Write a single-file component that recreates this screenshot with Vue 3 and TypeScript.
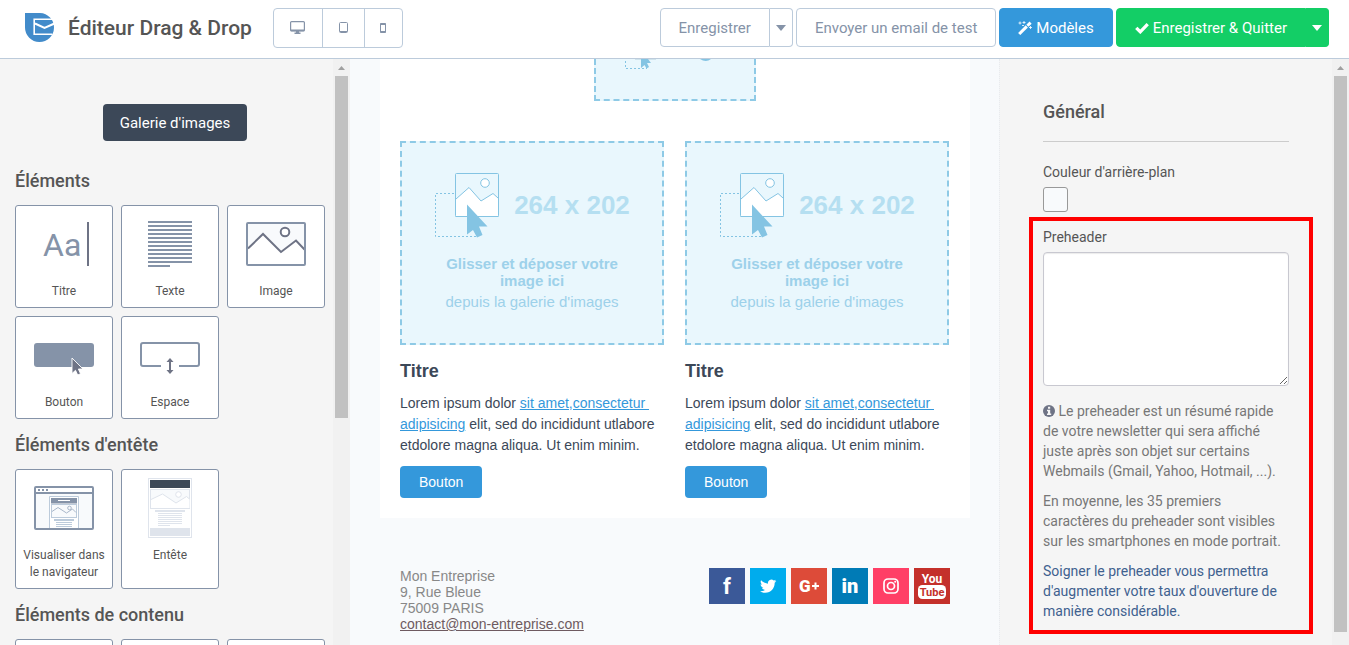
<script setup lang="ts">
import { ref } from 'vue'

interface Tile {
  id: string
  label: string
}

interface Group {
  title: string
  tiles: Tile[]
}

const groups: Group[] = [
  {
    title: 'Éléments',
    tiles: [
      { id: 'title', label: 'Titre' },
      { id: 'text', label: 'Texte' },
      { id: 'image', label: 'Image' },
      { id: 'button', label: 'Bouton' },
      { id: 'space', label: 'Espace' },
    ],
  },
  {
    title: "Éléments d'entête",
    tiles: [
      { id: 'browser', label: 'Visualiser dans le navigateur' },
      { id: 'header', label: 'Entête' },
    ],
  },
  {
    title: 'Éléments de contenu',
    tiles: [
      { id: 'content-a', label: '' },
      { id: 'content-b', label: '' },
      { id: 'content-c', label: '' },
    ],
  },
]

const columns = [1, 2]
const textLines = Array.from({ length: 11 }, (_, i) => 7 + i * 4)
const preheader = ref('')
</script>

<template>
  <div class="app">
    <header class="topbar">
      <svg class="logo" width="30" height="30" viewBox="0 0 30 30" aria-hidden="true">
        <path d="M0 0h15a14.500 14.500 0 1 1-15 14.500z" fill="#428bca" />
        <path d="M28 6.200H9.200V21.200H27" fill="none" stroke="#fff" stroke-width="1.600" />
        <path d="M10 10.500 19.500 15 29.500 10.500" fill="none" stroke="#fff" stroke-width="2" />
      </svg>
      <h1>Éditeur Drag &amp; Drop</h1>
      <div class="devices">
        <button type="button" aria-label="Ordinateur">
          <svg width="15" height="13" viewBox="0 0 15 13">
            <rect x="0.600" y="0.600" width="13.800" height="9.200" rx="1" fill="none" stroke="#8593a8" stroke-width="1.200" />
            <path d="M0.500 8.500h14v1.800h-14zM6 10h3v1.500h1.500V13h-6v-1.500H6z" fill="#8593a8" />
          </svg>
        </button>
        <button type="button" aria-label="Tablette">
          <svg width="9" height="11" viewBox="0 0 9 11">
            <rect x="0.500" y="0.500" width="8" height="10" rx="1" fill="none" stroke="#8593a8" />
            <path d="M1 9h7v1H1z" fill="#8593a8" />
          </svg>
        </button>
        <button type="button" aria-label="Mobile">
          <svg width="6" height="10" viewBox="0 0 6 10">
            <path d="M0.500 0.500h5v9h-5z" fill="none" stroke="#8593a8" />
            <path d="M0.500 0.500h5v1.500h-5zM0.500 8h5v1.500h-5z" fill="#8593a8" />
          </svg>
        </button>
      </div>
      <div class="actions">
        <div class="split">
          <button type="button" class="btn main">Enregistrer</button>
          <button type="button" class="btn caret" aria-label="Plus d'options">
            <svg width="10" height="6" viewBox="0 0 10 6"><path d="M0 0h10L5 6z" fill="#8593a8" /></svg>
          </button>
        </div>
        <button type="button" class="btn">Envoyer un email de test</button>
        <button type="button" class="btn blue">
          <svg width="14" height="14" viewBox="0 0 14 14">
            <path d="M1.200 13 8.800 5.400" stroke="#fff" stroke-width="3" />
            <path d="M9.400 4.800 12.600 1.600" stroke="#fff" stroke-width="3" />
            <path d="M2 0.500v3M0.500 2h3M6 0v3M4.500 1.500h3M4 4.500h2M12.500 5v3M11 6.500h3" stroke="#fff" stroke-width="0.800" />
          </svg>
          Modèles
        </button>
        <div class="split">
          <button type="button" class="btn green main">
            <svg width="14" height="12" viewBox="0 0 14 12">
              <path d="M1.300 5.800 5.300 9.800 12.700 2.200" fill="none" stroke="#fff" stroke-width="3.300" />
            </svg>
            Enregistrer &amp; Quitter
          </button>
          <button type="button" class="btn green caret" aria-label="Plus d'options">
            <svg width="10" height="6" viewBox="0 0 10 6"><path d="M0 0h10L5 6z" fill="#fff" /></svg>
          </button>
        </div>
      </div>
    </header>

    <div class="workspace">
      <aside class="library">
        <div class="library-body">
          <div class="gallery">
            <button type="button">Galerie d'images</button>
          </div>
          <section v-for="group in groups" :key="group.title">
            <h2>{{ group.title }}</h2>
            <div class="tiles">
              <div v-for="tile in group.tiles" :key="tile.id" class="tile">
                <svg width="60" height="60" viewBox="0 0 60 60" aria-hidden="true">
                  <template v-if="tile.id === 'title'">
                    <text x="9" y="42" font-family="Roboto, sans-serif" font-size="32" fill="#8593a8">Aa</text>
                    <path d="M54 8v44" stroke="#6e7385" stroke-width="2" />
                  </template>
                  <template v-else-if="tile.id === 'text'">
                    <rect v-for="y in textLines" :key="y" x="8" :y="y" width="44" height="2" fill="#8593a8" />
                    <rect x="8" y="51" width="22" height="2" fill="#8593a8" />
                  </template>
                  <template v-else-if="tile.id === 'image'">
                    <rect x="1" y="9" width="58" height="42" rx="1" fill="#fff" />
                    <path d="M2 34 17 19.500 35 37.500 50 26 58 35V10H2z" fill="#f8fafc" />
                    <path d="M2 34.500 17 20 35 38 50 26.500 58.500 35.500" fill="none" stroke="#6e7385" stroke-width="2" />
                    <circle cx="39" cy="18" r="4.300" fill="#fff" stroke="#6e7385" stroke-width="2" />
                    <rect x="1" y="9" width="58" height="42" rx="1" fill="none" stroke="#8593a8" stroke-width="2" />
                  </template>
                  <template v-else-if="tile.id === 'button'">
                    <rect y="18" width="60" height="24" rx="3" fill="#8593a8" />
                    <path d="M38 33v15.500l3.500-3.200 2.200 4.700 2.800-1.300-2.100-4.700H49z" fill="#6e7385" stroke="#fff" stroke-width="0.900" />
                  </template>
                  <template v-else-if="tile.id === 'space'">
                    <path d="M21 41H3a2 2 0 0 1-2-2V20a2 2 0 0 1 2-2h54a2 2 0 0 1 2 2v19a2 2 0 0 1-2 2H39" fill="none" stroke="#8593a8" stroke-width="2" />
                    <path d="M30 33l3.500 4H31v8h2.500L30 49l-3.500-4H29v-8h-2.500z" fill="#6e7385" />
                  </template>
                  <template v-else-if="tile.id === 'browser'">
                    <rect x="1" y="9" width="58" height="42" rx="1" fill="#f8fafc" stroke="#8593a8" stroke-width="2" />
                    <path d="M2 10h56v4H2z" fill="#fff" />
                    <path d="M1 15h58" stroke="#8593a8" stroke-width="2" />
                    <path d="M4 12h2M8 12h2M12 12h2" stroke="#8593a8" stroke-width="2" />
                    <path d="M15.500 50V18.500h29V50" fill="#fff" stroke="#bccbdb" />
                    <path d="M17 20h26v5.500H17z" fill="#8593a8" />
                    <path d="M24 22.500h12" stroke="#fff" />
                    <rect x="17.500" y="26.500" width="25" height="13" fill="#f8fafc" stroke="#bccbdb" />
                    <path d="M18 33.500 24 29.500 32.500 35 38.500 31 42 34.500" fill="none" stroke="#a9b7c9" />
                    <circle cx="35.500" cy="30" r="1.800" fill="none" stroke="#a9b7c9" />
                    <path d="M20 42h20" stroke="#bccbdb" stroke-width="2" />
                    <path d="M22 44.500h16M22 46.500h16M22 48.500h16" stroke="#bccbdb" />
                  </template>
                  <template v-else-if="tile.id === 'header'">
                    <rect x="8.500" y="0.500" width="43" height="59" fill="#fff" stroke="#dfe4ec" />
                    <path d="M10 2h40v8H10z" fill="#3c4858" />
                    <rect x="10.500" y="11.500" width="39" height="19" fill="#f8fafc" stroke="#dfe4ec" />
                    <path d="M11 21.500 22.500 16 36 25 46.500 18.500 49.500 21V30H11z" fill="#fff" />
                    <path d="M11 21.500 22.500 16 36 25 46.500 18.500 49.500 21" fill="none" stroke="#dfe4ec" />
                    <circle cx="38.500" cy="16.500" r="2.800" fill="#fff" stroke="#dfe4ec" />
                    <path d="M15 33h30" stroke="#dfe4ec" stroke-width="2" />
                    <path d="M18 35.500h24M18 37.500h24M18 39.500h24M18 41.500h24M18 43.500h24M18 45.500h24M18 47.500h12" stroke="#dfe4ec" />
                    <path d="M10 50h40v8H10z" fill="#dfe4ec" />
                  </template>
                </svg>
                <span>{{ tile.label }}</span>
              </div>
            </div>
          </section>
        </div>
        <div class="scrollbar" aria-hidden="true">
          <svg width="7" height="4" viewBox="0 0 7 4"><path d="M0 4h7L3.500 0z" fill="#a0a0a0" /></svg>
          <div class="thumb short"></div>
        </div>
      </aside>

      <main class="canvas">
        <article class="email">
          <div class="placeholder cropped">
            <svg width="100" height="12" viewBox="0 0 100 12" aria-hidden="true">
              <path d="M0.500 2V9.500H22" fill="none" stroke="#84c4e3" stroke-dasharray="2 2" />
              <path d="M10 0.500h21" stroke="#cfe3ec" />
              <path d="M16 0h7l3 4h-4l2 4-2.500 1.500L19.500 6 16 9z" fill="#84c4e3" />
              <path d="M75 0h11q-5 4-11 0z" fill="#84c4e3" />
            </svg>
          </div>
          <div class="columns">
            <section v-for="n in columns" :key="n">
              <div class="placeholder">
                <div class="size">
                  <svg width="66" height="66" viewBox="0 0 66 66" aria-hidden="true">
                    <path d="M20 21.500H1.500V64.500H42" fill="none" stroke="#84c4e3" stroke-dasharray="2 2" />
                    <rect x="21.500" y="1.500" width="43" height="43" rx="1" fill="#e9f7fd" stroke="#84c4e3" />
                    <path d="M22 27 35 15.500 47 29 59 21.500 64 26V44H22z" fill="#fff" />
                    <path d="M22 27 35 15.500 47 29 59 21.500 64 26" fill="none" stroke="#84c4e3" />
                    <circle cx="51" cy="11" r="4.300" fill="#fff" stroke="#84c4e3" />
                    <path d="M21.500 44.500h43" stroke="#84c4e3" />
                    <path d="M33 32.500V62.500l6-4.500 4 7.500 5.500-2.500-3.500-8.500h8.500z" fill="#84c4e3" />
                  </svg>
                  <span>264 x 202</span>
                </div>
                <p class="hint"><strong>Glisser et déposer votre image ici</strong></p>
                <p class="hint source">depuis la galerie d'images</p>
              </div>
              <h3>Titre</h3>
              <p class="lorem">
                Lorem ipsum dolor <a href="#">sit amet,consectetur&nbsp; adipisicing</a> elit, sed do incididunt utlabore
                etdolore magna aliqua. Ut enim minim.
              </p>
              <button type="button" class="cta">Bouton</button>
            </section>
          </div>
        </article>

        <footer class="footer">
          <address>
            Mon Entreprise<br />
            9, Rue Bleue<br />
            75009 PARIS<br />
            <a href="mailto:contact@mon-entreprise.com">contact@mon-entreprise.com</a>
          </address>
          <div class="social">
            <a href="#" aria-label="Facebook" class="facebook">
              <svg width="36" height="36" viewBox="0 0 36 36">
                <text x="18" y="26" text-anchor="middle" font-family="Roboto, sans-serif" font-weight="700" font-size="22" fill="#fff">f</text>
              </svg>
            </a>
            <a href="#" aria-label="Twitter" class="twitter">
              <svg width="36" height="36" viewBox="0 0 36 36">
                <g transform="translate(10 10) scale(0.680)">
                  <path d="M23.950 4.570a10 10 0 0 1-2.820.770 4.960 4.960 0 0 0 2.160-2.720c-.950.550-2 .950-3.120 1.180a4.920 4.920 0 0 0-8.380 4.480C7.690 8.090 4.070 6.130 1.640 3.160a4.820 4.820 0 0 0-.670 2.480c0 1.710.870 3.210 2.190 4.100a4.900 4.900 0 0 1-2.230-.620v.060a4.920 4.920 0 0 0 3.950 4.830 5 5 0 0 1-2.210.080 4.940 4.940 0 0 0 4.600 3.420A9.870 9.870 0 0 1 0 19.540a13.990 13.990 0 0 0 7.560 2.210c9.050 0 14-7.500 14-13.980 0-.210 0-.420-.020-.630a9.940 9.940 0 0 0 2.410-2.570z" fill="#fff" />
                </g>
              </svg>
            </a>
            <a href="#" aria-label="Google Plus" class="google">
              <svg width="36" height="36" viewBox="0 0 36 36">
                <text x="8" y="24" font-family="Roboto, sans-serif" font-weight="900" font-size="17" fill="#fff">G</text>
                <path d="M21 18h7M24.500 14.500v7" stroke="#fff" stroke-width="2" />
              </svg>
            </a>
            <a href="#" aria-label="LinkedIn" class="linkedin">
              <svg width="36" height="36" viewBox="0 0 36 36">
                <text x="18" y="25" text-anchor="middle" font-family="Roboto, sans-serif" font-weight="900" font-size="20" fill="#fff">in</text>
              </svg>
            </a>
            <a href="#" aria-label="Instagram" class="instagram">
              <svg width="36" height="36" viewBox="0 0 36 36">
                <rect x="11" y="11" width="14" height="14" rx="4" fill="none" stroke="#fff" stroke-width="1.700" />
                <circle cx="18" cy="18" r="3.500" fill="none" stroke="#fff" stroke-width="1.700" />
                <circle cx="22.200" cy="13.800" r="1" fill="#fff" />
              </svg>
            </a>
            <a href="#" aria-label="YouTube" class="youtube">
              <svg width="36" height="36" viewBox="0 0 36 36">
                <rect x="4" y="17" width="28" height="14" rx="4.500" fill="#fff" />
                <g font-family="Roboto, sans-serif" font-weight="700" text-anchor="middle">
                  <text x="18" y="15" font-size="12" fill="#fff">You</text>
                  <text x="18" y="28" font-size="11" fill="#c4302b">Tube</text>
                </g>
              </svg>
            </a>
          </div>
        </footer>
      </main>

      <aside class="settings">
        <div class="settings-body">
          <h2>Général</h2>
          <hr />
          <label for="bg">Couleur d'arrière-plan</label>
          <button id="bg" type="button" class="swatch"></button>
          <section class="highlight">
            <label for="preheader">Preheader</label>
            <textarea id="preheader" v-model="preheader"></textarea>
            <p>
              <svg width="12" height="12" viewBox="0 0 12 12" aria-hidden="true">
                <circle cx="6" cy="6" r="6" fill="#6e7385" />
                <path d="M5 1.800h2.200v1.900H5zM4 4.800h3.200v3.700H8.200V10H4V8.500h1V6.200H4z" fill="#f5f5f5" />
              </svg>
              Le preheader est un résumé rapide de votre newsletter qui sera affiché juste après son objet sur certains
              Webmails (Gmail, Yahoo, Hotmail, ...).
            </p>
            <p>En moyenne, les 35 premiers caractères du preheader sont visibles sur les smartphones en mode portrait.</p>
            <p class="tip">Soigner le preheader vous permettra d'augmenter votre taux d'ouverture de manière considérable.</p>
          </section>
        </div>
        <div class="scrollbar" aria-hidden="true">
          <svg width="7" height="4" viewBox="0 0 7 4"><path d="M0 4h7L3.500 0z" fill="#a0a0a0" /></svg>
          <div class="thumb long"></div>
        </div>
      </aside>
    </div>
  </div>
</template>

<style>
body {
  margin: 0;
}
</style>

<style scoped>
.app {
  display: flex;
  flex-direction: column;
  height: 100vh;
  overflow: hidden;
  background: #f8fafc;
  color: #555;
  font-family: Roboto, sans-serif;
  font-size: 14px;
}
*,
*::before,
*::after {
  box-sizing: border-box;
}
button {
  font: inherit;
  cursor: pointer;
}
svg {
  display: block;
  flex: none;
}
.topbar {
  display: flex;
  align-items: center;
  flex: none;
  height: 59px;
  padding: 0 20px 3px 25px;
  background: #fff;
  border-bottom: 1px solid #bccbdb;
}
h1 {
  margin: 0 21px 0 13px;
  font-size: 21px;
  line-height: 30px;
  font-weight: 500;
  white-space: nowrap;
}
.devices {
  display: flex;
  height: 40px;
  border: 1px solid #bccbdb;
  border-radius: 4px;
}
.devices button {
  display: flex;
  align-items: center;
  justify-content: center;
  width: 48px;
  padding: 0;
  background: none;
  border: 0;
}
.devices button + button {
  width: 42px;
  border-left: 1px solid #bccbdb;
}
.devices button:last-child {
  width: 38px;
}
.actions {
  display: flex;
  gap: 3px;
  margin-left: auto;
}
.btn {
  display: flex;
  align-items: center;
  gap: 4px;
  height: 39px;
  padding: 0 18px;
  border: 1px solid #bccbdb;
  border-radius: 4px;
  background: #fff;
  color: #8593a8;
  font-size: 15px;
  line-height: 20px;
  white-space: nowrap;
}
.split {
  display: flex;
}
.split .main {
  border-radius: 4px 0 0 4px;
}
.split .caret {
  padding: 0 6px;
  border-left: 0;
  border-radius: 0 4px 4px 0;
}
.blue {
  background: #3498db;
  border-color: #3498db;
  color: #fff;
}
.green {
  background: #13ce66;
  border-color: #13ce66;
  color: #fff;
}
.workspace {
  display: flex;
  flex: 1;
  min-height: 0;
}
.library,
.settings {
  display: flex;
  flex: none;
  width: 350px;
  background: #f5f5f5;
  overflow: hidden;
}
.library-body {
  flex: 1;
  padding: 45px 0 0 15px;
}
.gallery {
  display: flex;
  justify-content: center;
  padding-left: 2px;
  margin-bottom: 14px;
}
.gallery button {
  height: 37px;
  padding: 0 17px;
  border: 0;
  border-radius: 4px;
  background: #3c4858;
  color: #fff;
  font-size: 15px;
}
h2 {
  margin: 0;
  font-size: 18px;
  line-height: 20px;
  font-weight: 500;
}
.library h2 {
  padding: 16px 0 14px;
}
.tiles {
  display: grid;
  grid-template-columns: repeat(3, 98px);
  gap: 8px;
}
.tile {
  display: flex;
  flex-direction: column;
  align-items: center;
  gap: 9px;
  min-height: 103px;
  padding: 8px 4px 7px;
  border: 1px solid #8593a8;
  border-radius: 3px;
  background: #fff;
  font-size: 12px;
  line-height: 17px;
  text-align: center;
}
.scrollbar {
  display: flex;
  flex-direction: column;
  align-items: center;
  flex: none;
  gap: 6px;
  width: 17px;
  padding-top: 7px;
  background: #f1f1f1;
}
.thumb {
  width: 13px;
  background: #c1c1c1;
}
.short {
  height: 59%;
}
.long {
  height: 96%;
}
.canvas {
  flex: 1;
  min-width: 0;
  padding: 0 29px 0 30px;
  overflow: hidden;
  font-family: "Liberation Sans", Arial, sans-serif;
}
.email {
  padding: 0 21px 20px 20px;
  background: #fff;
}
.placeholder {
  display: flex;
  flex-direction: column;
  align-items: center;
  height: 204px;
  padding-top: 29px;
  border: 2px dashed #8ecae6;
  background: #e9f7fd;
}
.cropped {
  width: 162px;
  height: 42px;
  margin: 0 auto 40px;
  padding: 0;
  border-top: 0;
}
.columns {
  display: grid;
  grid-template-columns: 1fr 1fr;
  gap: 21px;
}
.size {
  display: flex;
  align-items: center;
  gap: 14px;
  color: #b5dff1;
  font-size: 26px;
  font-weight: 700;
}
.hint {
  width: 190px;
  margin: 17px 0 0;
  color: #9dd1ea;
  font-size: 15px;
  line-height: 17px;
  text-align: center;
}
.source {
  margin-top: 4px;
}
h3 {
  margin: 15px 0 11px;
  color: #3c4858;
  font-size: 18px;
  line-height: 22px;
}
.lorem {
  margin: 0;
  color: #3c4858;
  font-size: 14px;
  line-height: 21px;
}
.lorem a {
  color: #3498db;
}
.cta {
  display: block;
  height: 32px;
  margin-top: 10px;
  padding: 0 19px;
  border: 0;
  border-radius: 4px;
  background: #3498db;
  color: #fff;
  font-size: 14px;
}
.footer {
  display: flex;
  justify-content: space-between;
  padding: 50px 20px;
}
address {
  color: #888;
  font-style: normal;
  line-height: 16px;
}
address a {
  color: #6e5a60;
}
.social {
  display: flex;
  align-items: flex-start;
  gap: 5px;
}
.facebook {
  background: #3b5998;
}
.twitter {
  background: #00aced;
}
.google {
  background: #dd4b39;
}
.linkedin {
  background: #007bb6;
}
.instagram {
  background: #ff3f66;
}
.youtube {
  background: #c4302b;
}
.settings {
  border-left: 1px dotted #e8ebef;
}
.settings-body {
  flex: 1;
  min-width: 0;
  padding: 43px 43px 0;
}
hr {
  margin: 19px 0 20px;
  border: 0;
  border-top: 1px solid #ccc;
}
label {
  display: block;
  line-height: 20px;
}
.swatch {
  display: block;
  width: 25px;
  height: 25px;
  margin: 5px 0;
  padding: 0;
  border: 1px solid #999;
  border-radius: 3px;
  background: #f8fafc;
}
.highlight {
  margin: 0 -24px 0 -14px;
  padding: 6px 20px 9px 10px;
  border: 4px solid #f00;
}
textarea {
  display: block;
  width: 100%;
  height: 134px;
  margin: 5px 0 15px;
  border: 1px solid #c8c8d0;
  border-radius: 4px;
  background: #fff;
  box-shadow: inset 0 1px 1px rgba(0, 0, 0, 0.08);
  font: inherit;
  resize: vertical;
}
.highlight p {
  margin: 0 0 10px;
  color: #777;
  line-height: 20px;
}
.highlight p svg {
  display: inline-block;
  vertical-align: -1px;
}
.highlight .tip {
  margin: 0;
  color: #3f618f;
}
</style>
